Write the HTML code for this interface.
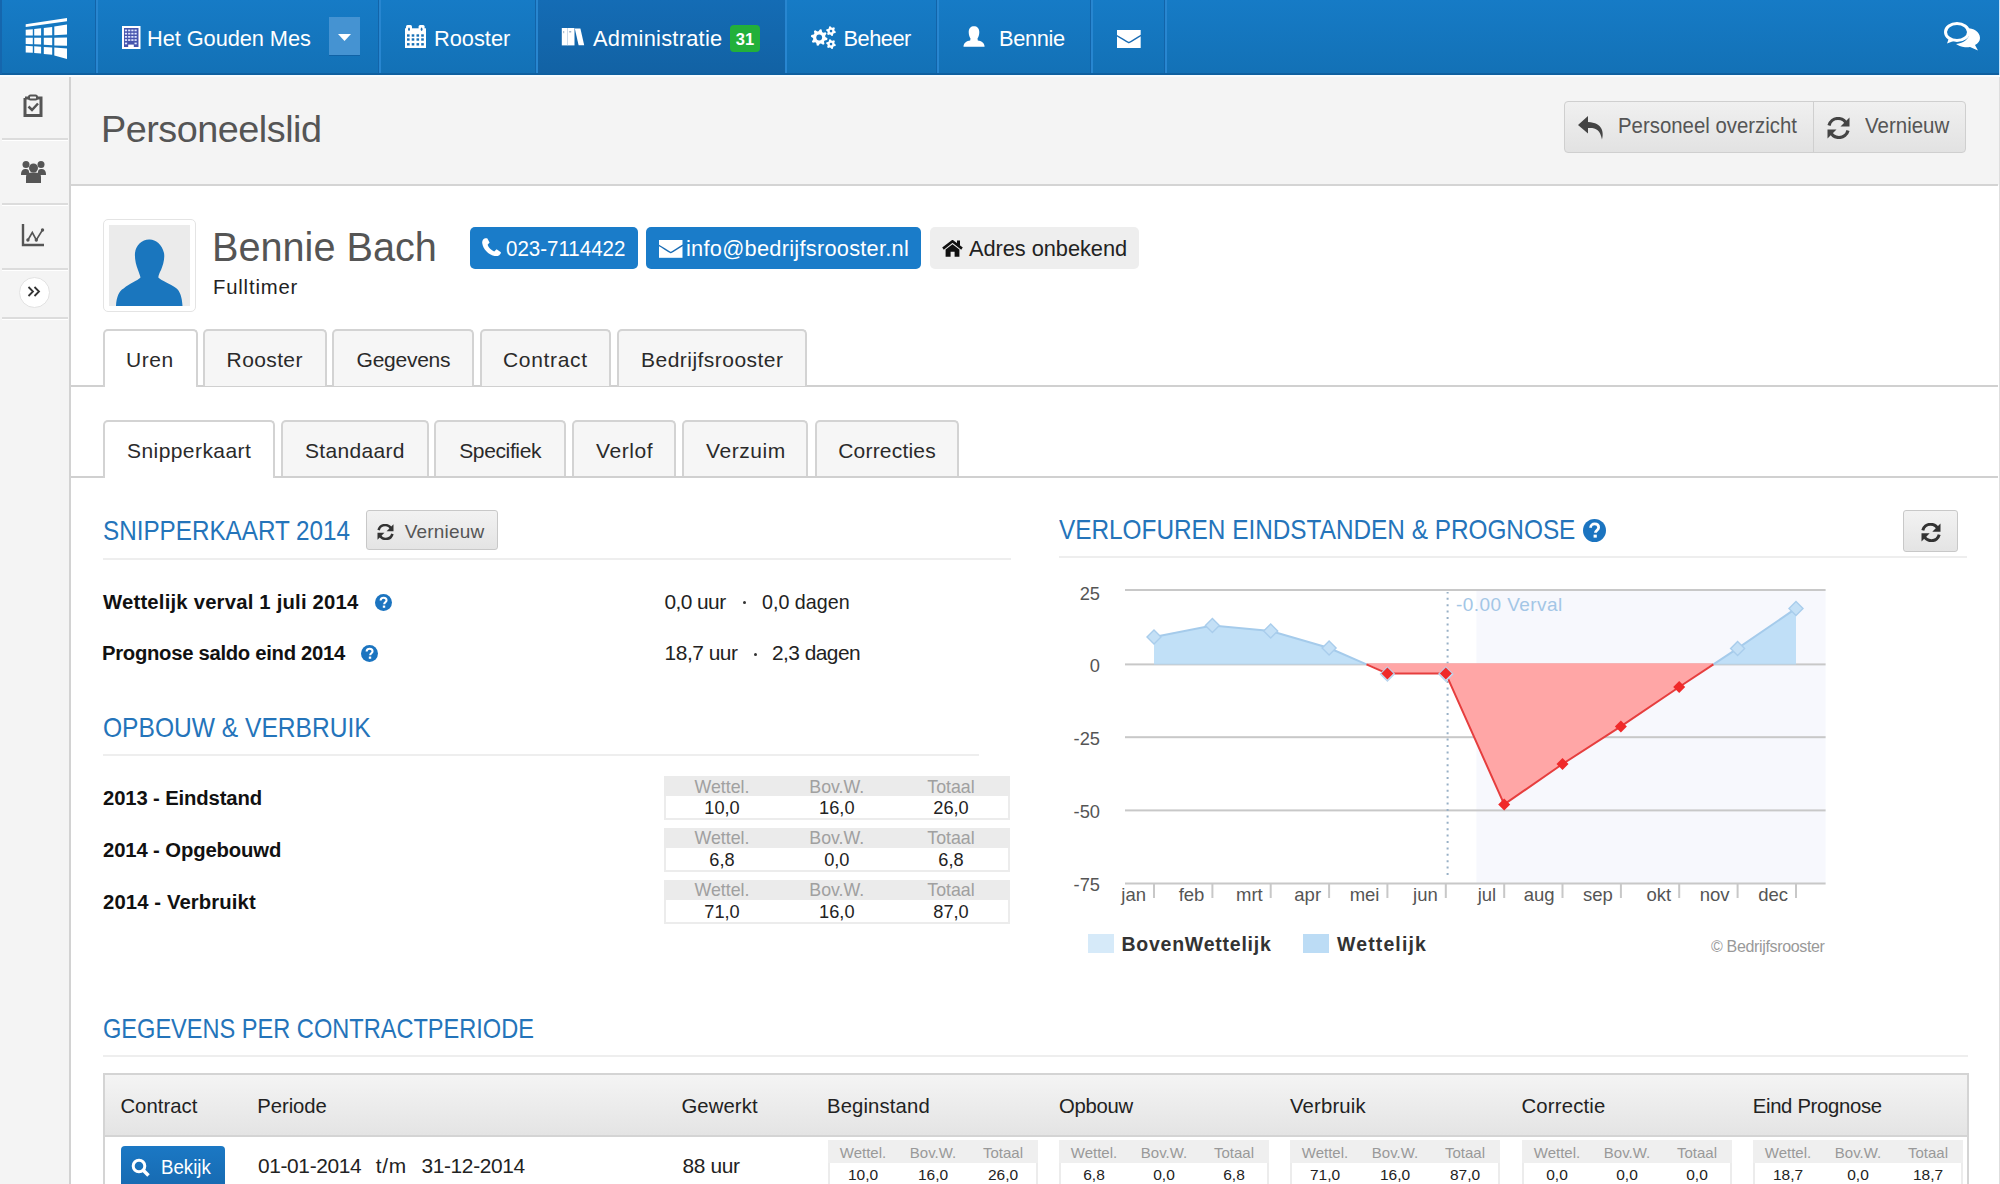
<!DOCTYPE html><html><head><meta charset="utf-8"><style>
html,body{margin:0;padding:0;}
body{width:2000px;height:1184px;overflow:hidden;position:relative;background:#fff;font-family:"Liberation Sans",sans-serif;}
.t{position:absolute;white-space:pre;line-height:1;}
svg{display:block;}
</style></head><body>
<div style="position:absolute;left:0px;top:0px;width:2000px;height:74px;background:linear-gradient(#167bc6,#1371b6);"></div>
<div style="position:absolute;left:0px;top:73px;width:2000px;height:2px;background:#0f60a0;"></div>
<div style="position:absolute;left:0px;top:75px;width:2000px;height:2px;background:#f7fcff;"></div>
<div style="position:absolute;left:537px;top:0px;width:248px;height:73px;background:linear-gradient(#146cb5,#1262a4);"></div>
<div style="position:absolute;left:95px;top:0px;width:1px;height:73px;background:#1264a9;"></div>
<div style="position:absolute;left:96px;top:0px;width:1.6px;height:73px;background:#2886d0;"></div>
<div style="position:absolute;left:378px;top:0px;width:1px;height:73px;background:#1264a9;"></div>
<div style="position:absolute;left:379px;top:0px;width:1.6px;height:73px;background:#2886d0;"></div>
<div style="position:absolute;left:535px;top:0px;width:1px;height:73px;background:#1264a9;"></div>
<div style="position:absolute;left:536px;top:0px;width:1.6px;height:73px;background:#2886d0;"></div>
<div style="position:absolute;left:785px;top:0px;width:1.6px;height:73px;background:#2886d0;"></div>
<div style="position:absolute;left:936px;top:0px;width:1px;height:73px;background:#1264a9;"></div>
<div style="position:absolute;left:937px;top:0px;width:1.6px;height:73px;background:#2886d0;"></div>
<div style="position:absolute;left:1090px;top:0px;width:1px;height:73px;background:#1264a9;"></div>
<div style="position:absolute;left:1091px;top:0px;width:1.6px;height:73px;background:#2886d0;"></div>
<div style="position:absolute;left:1164px;top:0px;width:1px;height:73px;background:#1264a9;"></div>
<div style="position:absolute;left:1165px;top:0px;width:1.6px;height:73px;background:#2886d0;"></div>
<div style="position:absolute;left:0px;top:0px;width:2px;height:74px;background:#1566ad;"></div>
<div style="position:absolute;left:1998.5px;top:0px;width:1.5px;height:74.5px;background:#c4e1f9;"></div>
<svg style="position:absolute;left:24px;top:16px;" width="46" height="46" viewBox="0 0 46 46"><g fill="#fff"><polygon points="1.7,8.2 43,2.1 43,5.2 1.7,11"/><polygon points="1.7,13.8 8.8,13.2 8.8,19.5 1.7,19.6"/><polygon points="10.2,13.0 17.1,12.2 17.1,19.4 10.2,19.5"/><polygon points="19.8,11.9 28.2,10.9 28.2,19.3 19.8,19.4"/><polygon points="30.3,10.6 43,8.6 43,18.5 30.3,19.2"/><polygon points="1.7,21.8 8.8,21.8 8.8,28.2 1.7,28.0"/><polygon points="10.2,21.8 17.1,21.8 17.1,28.6 10.2,28.3"/><polygon points="19.8,21.8 28.2,21.8 28.2,29.2 19.8,28.8"/><polygon points="30.3,21.7 43,21.6 43,29.7 30.3,29.4"/><polygon points="1.7,29.8 8.8,30.2 8.8,36.8 1.7,36.5"/><polygon points="10.2,30.3 17.1,30.7 17.1,37.6 10.2,37.1"/><polygon points="19.8,30.9 28.2,31.4 28.2,38.8 19.8,38.1"/><polygon points="30.3,31.6 43,32.4 43,43 30.3,39.5"/></g></svg>
<svg style="position:absolute;left:122px;top:26px;" width="18.5" height="23" viewBox="0 0 18.5 23"><rect x="0" y="0" width="18.5" height="23" fill="#fff"/><rect x="2" y="2" width="14.5" height="19" fill="#4654ad"/><g fill="#dfe8ff"><rect x="2.9" y="3.6" width="2.2" height="1.7"/><rect x="6.1" y="3.6" width="2.2" height="1.7"/><rect x="9.3" y="3.6" width="2.2" height="1.7"/><rect x="12.5" y="3.6" width="2.2" height="1.7"/><rect x="2.9" y="6.8" width="2.2" height="1.7"/><rect x="6.1" y="6.8" width="2.2" height="1.7"/><rect x="9.3" y="6.8" width="2.2" height="1.7"/><rect x="12.5" y="6.8" width="2.2" height="1.7"/><rect x="2.9" y="10" width="2.2" height="1.7"/><rect x="6.1" y="10" width="2.2" height="1.7"/><rect x="9.3" y="10" width="2.2" height="1.7"/><rect x="12.5" y="10" width="2.2" height="1.7"/><rect x="2.9" y="13.2" width="2.2" height="1.7"/><rect x="6.1" y="13.2" width="2.2" height="1.7"/><rect x="9.3" y="13.2" width="2.2" height="1.7"/><rect x="12.5" y="13.2" width="2.2" height="1.7"/><rect x="2.9" y="16.6" width="2.2" height="1.7"/><rect x="12.5" y="16.6" width="2.2" height="1.7"/></g><rect x="6.2" y="18.6" width="5.6" height="4.4" fill="#fff"/></svg>
<div style="position:absolute;left:329px;top:17px;width:31px;height:38px;background:#4593d2;box-shadow:0 1px 0 #1062a6;"></div>
<svg style="position:absolute;left:338px;top:34px;" width="13" height="7" viewBox="0 0 13 7"><polygon points="0,0 13,0 6.5,7" fill="#fff"/></svg>
<svg style="position:absolute;left:405px;top:24.5px;" width="21" height="23.5" viewBox="0 0 21 23.5"><rect x="0" y="3.3" width="21" height="20.2" fill="#fff"/><rect x="1" y="0" width="6" height="6" rx="1.5" fill="#fff"/><rect x="13.6" y="0" width="6" height="6" rx="1.5" fill="#fff"/><ellipse cx="4" cy="4.2" rx="0.9" ry="1.7" fill="#1a6fb5"/><ellipse cx="16.6" cy="4.2" rx="0.9" ry="1.7" fill="#1a6fb5"/><g fill="#1670b7"><rect x="2" y="9.3" width="2.6" height="2.4"/><rect x="6.7" y="9.3" width="2.6" height="2.4"/><rect x="11.5" y="9.3" width="2.6" height="2.4"/><rect x="16.2" y="9.3" width="2.6" height="2.4"/><rect x="2" y="13.3" width="2.6" height="2.4"/><rect x="6.7" y="13.3" width="2.6" height="2.4"/><rect x="11.5" y="13.3" width="2.6" height="2.4"/><rect x="16.2" y="13.3" width="2.6" height="2.4"/><rect x="2" y="18.1" width="2.6" height="2.4"/><rect x="6.7" y="18.1" width="2.6" height="2.4"/><rect x="11.5" y="18.1" width="2.6" height="2.4"/><rect x="16.2" y="18.1" width="2.6" height="2.4"/></g></svg>
<svg style="position:absolute;left:561px;top:28px;" width="24" height="18" viewBox="0 0 24 18"><g fill="#fff"><rect x="0.8" y="0" width="5.2" height="17.4"/><rect x="6.3" y="0" width="7.2" height="17.4"/><polygon points="13.8,0.6 19.4,0.6 23.2,17.2 17.6,17.2"/></g><rect x="2.2" y="3" width="1" height="2.2" fill="#9fb3c8"/><rect x="8.2" y="3" width="2" height="1.5" fill="#9fb3c8"/><rect x="6" y="0" width="0.8" height="17.4" fill="#d0dcea"/></svg>
<div style="position:absolute;left:730px;top:25px;width:30px;height:27px;background:#22b03a;border-radius:4px;"></div>
<svg style="position:absolute;left:809px;top:25px;" width="28" height="25" viewBox="0 0 28 25"><polygon points="18.46,13.31 18.14,14.91 15.67,15.42 14.99,16.43 15.47,18.92 14.11,19.82 12.00,18.43 10.81,18.67 9.39,20.76 7.79,20.44 7.28,17.97 6.27,17.29 3.78,17.77 2.88,16.41 4.27,14.30 4.03,13.11 1.94,11.69 2.26,10.09 4.73,9.58 5.41,8.57 4.93,6.08 6.29,5.18 8.40,6.57 9.59,6.33 11.01,4.24 12.61,4.56 13.12,7.03 14.13,7.71 16.62,7.23 17.52,8.59 16.13,10.70 16.37,11.89" fill="#fff"/><circle cx="10.2" cy="12.5" r="2.9" fill="#1874be"/><polygon points="26.86,6.74 26.53,7.98 24.86,8.29 24.19,8.96 23.88,10.63 22.64,10.96 21.53,9.67 20.62,9.43 19.02,9.99 18.11,9.08 18.67,7.48 18.43,6.57 17.14,5.46 17.47,4.22 19.14,3.91 19.81,3.24 20.12,1.57 21.36,1.24 22.47,2.53 23.38,2.77 24.98,2.21 25.89,3.12 25.33,4.72 25.57,5.63" fill="#fff"/><circle cx="22" cy="6.1" r="1.3" fill="#1874be"/><polygon points="26.86,19.74 26.53,20.98 24.86,21.29 24.19,21.96 23.88,23.63 22.64,23.96 21.53,22.67 20.62,22.43 19.02,22.99 18.11,22.08 18.67,20.48 18.43,19.57 17.14,18.46 17.47,17.22 19.14,16.91 19.81,16.24 20.12,14.57 21.36,14.24 22.47,15.53 23.38,15.77 24.98,15.21 25.89,16.12 25.33,17.72 25.57,18.63" fill="#fff"/><circle cx="22" cy="19.1" r="1.3" fill="#1874be"/></svg>
<svg style="position:absolute;left:963px;top:26px;" width="22" height="21" viewBox="0 0 22 21"><path d="M11,0.2 C14,0.2 16.3,2.2 16.3,6 C16.3,9 15.5,11 14.5,12.5 L14.8,14.5 C18,15 21.5,16.5 21.6,20.8 L0.5,20.8 C0.6,16.5 4,15 7.2,14.5 L7.5,12.5 C6.5,11 5.7,9 5.7,6 C5.7,2.2 8,0.2 11,0.2 Z" fill="#fff"/></svg>
<svg style="position:absolute;left:1117px;top:29.5px;" width="23.7" height="18" viewBox="0 0 23.7 18"><rect x="0" y="0" width="23.7" height="18" fill="#fff"/><path d="M-0.5,5.4 C4,7.6 8,11 11.85,12.7 C15.7,11 19.7,7.6 24.2,5.4" fill="none" stroke="#1a6cb4" stroke-width="1.3"/></svg>
<svg style="position:absolute;left:1944px;top:21px;" width="37" height="30" viewBox="0 0 37 30"><path d="M22,7 C30,7 36,11 36,17 C36,20 34,22.5 31,24 L34,29.5 L26,26 C24,26.3 23,26.3 21,26.2 C17,26 14,24.5 12,23 C20,22 25,18 25,13 C25,10.5 24,8.5 22,7 Z" fill="#fff"/><ellipse cx="13" cy="11" rx="11.5" ry="8.5" fill="none" stroke="#fff" stroke-width="3"/><path d="M5,17 L3,22.5 L11,19.5 Z" fill="#fff"/></svg>
<div style="position:absolute;left:0px;top:77px;width:69px;height:1107px;background:#f4f4f4;"></div>
<div style="position:absolute;left:69px;top:77px;width:2px;height:1107px;background:#d2d2d2;"></div>
<div style="position:absolute;left:2px;top:138px;width:66px;height:1.5px;background:#dcdcdc;"></div>
<div style="position:absolute;left:2px;top:139.5px;width:66px;height:1.5px;background:#fff;"></div>
<div style="position:absolute;left:2px;top:203px;width:66px;height:1.5px;background:#dcdcdc;"></div>
<div style="position:absolute;left:2px;top:204.5px;width:66px;height:1.5px;background:#fff;"></div>
<div style="position:absolute;left:2px;top:268px;width:66px;height:1.5px;background:#dcdcdc;"></div>
<div style="position:absolute;left:2px;top:269.5px;width:66px;height:1.5px;background:#fff;"></div>
<div style="position:absolute;left:2px;top:317px;width:66px;height:1.5px;background:#dcdcdc;"></div>
<div style="position:absolute;left:2px;top:318.5px;width:66px;height:1.5px;background:#fff;"></div>
<svg style="position:absolute;left:23px;top:94px;" width="20" height="23" viewBox="0 0 20 23"><path d="M2,4 H6 M14,4 H18 V21.5 H2 V4" fill="none" stroke="#555" stroke-width="3"/><rect x="6" y="1.5" width="8" height="4" rx="1.5" fill="none" stroke="#555" stroke-width="2"/><path d="M5.5,12.5 L9,16 L15,9.5" fill="none" stroke="#555" stroke-width="2.5"/></svg>
<svg style="position:absolute;left:21px;top:160px;" width="25" height="23" viewBox="0 0 25 23"><g fill="#555"><circle cx="5" cy="4.5" r="3.5"/><circle cx="20" cy="4.5" r="3.5"/><circle cx="12.5" cy="8" r="4.5"/><path d="M0,15 C0,10 2,9 5,9 C7,9 8,10 8,12 L8,15 Z"/><path d="M25,15 C25,10 23,9 20,9 C18,9 17,10 17,12 L17,15 Z"/><path d="M5,23 L5,17 C5,13 8,12.5 12.5,12.5 C17,12.5 20,13 20,17 L20,23 Z"/></g></svg>
<svg style="position:absolute;left:21px;top:224px;" width="24" height="23" viewBox="0 0 24 23"><path d="M2,0 V21 H23" fill="none" stroke="#555" stroke-width="2.4"/><path d="M6.9,16 L11.3,8.5 L15.3,16 L21.5,6" fill="none" stroke="#555" stroke-width="1.6"/><g fill="#555"><circle cx="6.9" cy="16" r="1.7"/><circle cx="15.3" cy="16" r="1.7"/><circle cx="21.5" cy="6" r="1.7"/></g></svg>
<div style="position:absolute;left:19px;top:277px;width:29px;height:29px;background:#fff;border:1px solid #e2e2e2;border-radius:50%;"></div>
<svg style="position:absolute;left:27px;top:285px;" width="14" height="13" viewBox="0 0 14 13"><path d="M1.5,2 L6,6.5 L1.5,11 M7.5,2 L12,6.5 L7.5,11" fill="none" stroke="#333" stroke-width="1.8"/></svg>
<div style="position:absolute;left:71px;top:77px;width:1928px;height:108px;background:#f4f4f4;"></div>
<div style="position:absolute;left:71px;top:184px;width:1927px;height:2px;background:#d4d4d4;"></div>
<div style="position:absolute;left:1999px;top:77px;width:1px;height:1107px;background:#dedede;"></div>
<div style="position:absolute;left:1564px;top:101px;width:402px;height:52px;background:linear-gradient(#f0f0f0,#e2e2e2);border:1px solid #cfcfcf;border-radius:4px;box-sizing:border-box;"></div>
<div style="position:absolute;left:1813px;top:102px;width:1px;height:50px;background:#cfcfcf;"></div>
<svg style="position:absolute;left:1578px;top:116px;" width="26" height="24" viewBox="0 0 26 24"><path d="M10,0 L0,9 L10,17.5 V12 C17,11.5 22,13 24,23.5 C26,17 25,6.5 10,6 Z" fill="#444"/></svg>
<svg style="position:absolute;left:1827px;top:117px;" width="23" height="22" viewBox="0 0 23 22"><path d="M20,8 C18.5,4 15,1.5 11,1.5 C6.5,1.5 3,4.5 2,8.5" fill="none" stroke="#444" stroke-width="3.2"/><polygon points="22.5,0.5 22.5,9.5 13.5,9.5" fill="#444"/><path d="M3,14 C4.5,18 8,20.5 12,20.5 C16.5,20.5 20,17.5 21,13.5" fill="none" stroke="#444" stroke-width="3.2"/><polygon points="0.5,21.5 0.5,12.5 9.5,12.5" fill="#444"/></svg>
<div style="position:absolute;left:103px;top:219px;width:93px;height:93px;background:#fff;border:1px solid #e4e4e4;border-radius:5px;box-sizing:border-box;"></div>
<div style="position:absolute;left:109px;top:225px;width:81px;height:81px;background:#ebebeb;"></div>
<svg style="position:absolute;left:109px;top:225px;" width="81" height="81" viewBox="0 0 81 81"><path d="M40,14.5 C46,14 53,19 55,28 C56,34 54,40 52,45 C50.5,48 49.5,50 49.3,52.5 C53,56 60,58 67,63 C71,66 73,72 73.5,81 L7,81 C7.5,72 10,66 14.6,63.5 C21,58 28,56 31.5,52.5 C31,50 30,48 29,45 C27,40 25.5,34 26,28 C27,20 33,14.5 40,14.5 Z" fill="#1a76be"/></svg>
<div style="position:absolute;left:470px;top:227px;width:168px;height:42px;background:#1a7cc9;border-radius:5px;"></div>
<svg style="position:absolute;left:482px;top:237.5px;" width="19" height="18.5" viewBox="0 0 19 18.5"><path d="M3.2,0.3 C1.2,0.8 0,2.8 0.2,5 C1,11.5 7.5,17.8 14,18.2 C16,18.3 17.8,17.3 18.7,15.6 L18.9,14.2 L14.6,11.3 L12.2,13.4 C9.2,12.4 6.6,9.8 5.6,6.8 L7.6,4.6 L5.2,0.2 Z" fill="#fff"/></svg>
<div style="position:absolute;left:646px;top:227px;width:275px;height:42px;background:#1a7cc9;border-radius:5px;"></div>
<svg style="position:absolute;left:659px;top:240px;" width="23.5" height="17.8" viewBox="0 0 23.5 17.8"><rect x="0" y="0" width="23.5" height="17.8" fill="#fff"/><path d="M-0.5,5.2 C4,7.5 8,11 11.75,12.6 C15.5,11 19.5,7.5 24,5.2" fill="none" stroke="#1a6cb4" stroke-width="1.3"/></svg>
<div style="position:absolute;left:930px;top:227px;width:209px;height:42px;background:#eeeeee;border-radius:5px;"></div>
<svg style="position:absolute;left:942px;top:239.5px;" width="21" height="17" viewBox="0 0 21 17"><polyline points="1,8.6 10.5,1.3 20,8.6" fill="none" stroke="#111" stroke-width="2.6"/><rect x="15" y="0.5" width="3" height="5" fill="#111"/><path d="M3.6,9.6 L10.5,4.2 L17.4,9.6 V16.8 H12.6 V11.8 H8.6 V16.8 H3.6 Z" fill="#111"/></svg>
<div style="position:absolute;left:71px;top:385px;width:1927px;height:2px;background:#d0d0d0;"></div>
<div style="position:absolute;left:103px;top:329px;width:95px;height:58px;background:#fff;border:2px solid #d3d3d3;border-bottom:none;border-radius:5px 5px 0 0;box-sizing:border-box;"></div>
<div style="position:absolute;left:203px;top:329px;width:124px;height:57px;background:#f6f6f6;border:2px solid #d3d3d3;border-bottom:none;border-radius:5px 5px 0 0;box-sizing:border-box;"></div>
<div style="position:absolute;left:332px;top:329px;width:142px;height:57px;background:#f6f6f6;border:2px solid #d3d3d3;border-bottom:none;border-radius:5px 5px 0 0;box-sizing:border-box;"></div>
<div style="position:absolute;left:480px;top:329px;width:131px;height:57px;background:#f6f6f6;border:2px solid #d3d3d3;border-bottom:none;border-radius:5px 5px 0 0;box-sizing:border-box;"></div>
<div style="position:absolute;left:617px;top:329px;width:190px;height:57px;background:#f6f6f6;border:2px solid #d3d3d3;border-bottom:none;border-radius:5px 5px 0 0;box-sizing:border-box;"></div>
<div style="position:absolute;left:71px;top:476px;width:1927px;height:2px;background:#d0d0d0;"></div>
<div style="position:absolute;left:103px;top:420px;width:172px;height:58px;background:#fff;border:2px solid #d3d3d3;border-bottom:none;border-radius:5px 5px 0 0;box-sizing:border-box;"></div>
<div style="position:absolute;left:281px;top:420px;width:148px;height:56px;background:#f6f6f6;border:2px solid #d3d3d3;border-bottom:none;border-radius:5px 5px 0 0;box-sizing:border-box;"></div>
<div style="position:absolute;left:434px;top:420px;width:132px;height:56px;background:#f6f6f6;border:2px solid #d3d3d3;border-bottom:none;border-radius:5px 5px 0 0;box-sizing:border-box;"></div>
<div style="position:absolute;left:572px;top:420px;width:104px;height:56px;background:#f6f6f6;border:2px solid #d3d3d3;border-bottom:none;border-radius:5px 5px 0 0;box-sizing:border-box;"></div>
<div style="position:absolute;left:682px;top:420px;width:126px;height:56px;background:#f6f6f6;border:2px solid #d3d3d3;border-bottom:none;border-radius:5px 5px 0 0;box-sizing:border-box;"></div>
<div style="position:absolute;left:815px;top:420px;width:144px;height:56px;background:#f6f6f6;border:2px solid #d3d3d3;border-bottom:none;border-radius:5px 5px 0 0;box-sizing:border-box;"></div>
<div style="position:absolute;left:366px;top:510px;width:132px;height:40px;background:linear-gradient(#f2f2f2,#e4e4e4);border:1px solid #c8c8c8;border-radius:3px;box-sizing:border-box;"></div>
<svg style="position:absolute;left:377px;top:524px;" width="17" height="16" viewBox="0 0 23 22"><path d="M20,8 C18.5,4 15,1.5 11,1.5 C6.5,1.5 3,4.5 2,8.5" fill="none" stroke="#333" stroke-width="3.5"/><polygon points="22.5,0.5 22.5,10 13,10" fill="#333"/><path d="M3,14 C4.5,18 8,20.5 12,20.5 C16.5,20.5 20,17.5 21,13.5" fill="none" stroke="#333" stroke-width="3.5"/><polygon points="0.5,21.5 0.5,12 10,12" fill="#333"/></svg>
<div style="position:absolute;left:103px;top:558px;width:908px;height:2px;background:#eeeeee;"></div>
<svg style="position:absolute;left:375px;top:594px;" width="17" height="17" viewBox="0 0 20 20"><circle cx="10" cy="10" r="10" fill="#1b74c0"/><path d="M6.6,7.6 C6.6,5.5 8.2,4.3 10.1,4.3 C12.2,4.3 13.6,5.6 13.6,7.3 C13.6,9.6 10.8,9.8 10.8,12" fill="none" stroke="#fff" stroke-width="2.4"/><rect x="9.2" y="13.6" width="2.8" height="2.6" fill="#fff"/></svg>
<svg style="position:absolute;left:361px;top:645px;" width="17" height="17" viewBox="0 0 20 20"><circle cx="10" cy="10" r="10" fill="#1b74c0"/><path d="M6.6,7.6 C6.6,5.5 8.2,4.3 10.1,4.3 C12.2,4.3 13.6,5.6 13.6,7.3 C13.6,9.6 10.8,9.8 10.8,12" fill="none" stroke="#fff" stroke-width="2.4"/><rect x="9.2" y="13.6" width="2.8" height="2.6" fill="#fff"/></svg>
<div style="position:absolute;left:743px;top:601px;width:3px;height:3px;background:#333;border-radius:50%;"></div>
<div style="position:absolute;left:754px;top:653px;width:3px;height:3px;background:#333;border-radius:50%;"></div>
<div style="position:absolute;left:103px;top:754px;width:876px;height:2px;background:#eeeeee;"></div>
<div style="position:absolute;left:664px;top:776.0px;width:346px;height:44px;background:#fff;border:2px solid #ececec;border-top:none;box-sizing:border-box;"></div>
<div style="position:absolute;left:664px;top:776.0px;width:346px;height:20px;background:#ebebeb;"></div>
<div style="position:absolute;left:664px;top:827.8px;width:346px;height:44px;background:#fff;border:2px solid #ececec;border-top:none;box-sizing:border-box;"></div>
<div style="position:absolute;left:664px;top:827.8px;width:346px;height:20px;background:#ebebeb;"></div>
<div style="position:absolute;left:664px;top:879.6px;width:346px;height:44px;background:#fff;border:2px solid #ececec;border-top:none;box-sizing:border-box;"></div>
<div style="position:absolute;left:664px;top:879.6px;width:346px;height:20px;background:#ebebeb;"></div>
<svg style="position:absolute;left:1583px;top:519px;" width="23" height="23" viewBox="0 0 20 20"><circle cx="10" cy="10" r="10" fill="#1b74c0"/><path d="M6.6,7.6 C6.6,5.5 8.2,4.3 10.1,4.3 C12.2,4.3 13.6,5.6 13.6,7.3 C13.6,9.6 10.8,9.8 10.8,12" fill="none" stroke="#fff" stroke-width="2.4"/><rect x="9.2" y="13.6" width="2.8" height="2.6" fill="#fff"/></svg>
<div style="position:absolute;left:1903px;top:510px;width:55px;height:42px;background:linear-gradient(#f2f2f2,#e4e4e4);border:1px solid #c8c8c8;border-radius:3px;box-sizing:border-box;"></div>
<svg style="position:absolute;left:1921px;top:523px;" width="20" height="19" viewBox="0 0 23 22"><path d="M20,8 C18.5,4 15,1.5 11,1.5 C6.5,1.5 3,4.5 2,8.5" fill="none" stroke="#333" stroke-width="3.5"/><polygon points="22.5,0.5 22.5,10 13,10" fill="#333"/><path d="M3,14 C4.5,18 8,20.5 12,20.5 C16.5,20.5 20,17.5 21,13.5" fill="none" stroke="#333" stroke-width="3.5"/><polygon points="0.5,21.5 0.5,12 10,12" fill="#333"/></svg>
<div style="position:absolute;left:1059px;top:556px;width:908px;height:2px;background:#eeeeee;"></div>
<svg style="position:absolute;left:0;top:0" width="2000" height="1184"><rect x="1476.4" y="590" width="349.2" height="293.5" fill="#f7f8fd"/><rect x="1125" y="589" width="700.6" height="2" fill="#c8c8c8"/><rect x="1125" y="663.4" width="700.6" height="2" fill="#c8c8c8"/><rect x="1125" y="736.2" width="700.6" height="2" fill="#c8c8c8"/><rect x="1125" y="809.4" width="700.6" height="2" fill="#c8c8c8"/><rect x="1125" y="882.5" width="700.6" height="2" fill="#c8c8c8"/><line x1="1447.6" y1="592" x2="1447.6" y2="878" stroke="#98b0c6" stroke-width="2" stroke-dasharray="2,4.4" stroke-dashoffset="0.6"/><polygon points="1154.0,664.4 1154.0,637.0 1212.4,625.6 1270.7,631.0 1329.1,648.0 1366.5,664.4" fill="#b6dbf6" fill-opacity="0.85"/><polyline points="1154.0,637.0 1212.4,625.6 1270.7,631.0 1329.1,648.0 1366.5,664.4" fill="none" stroke="#a5cbeb" stroke-width="2"/><polygon points="1713.4,664.4 1737.6,648.4 1796.0,608.4 1796.0,664.4" fill="#b6dbf6" fill-opacity="0.85"/><polyline points="1713.4,664.4 1737.6,648.4 1796.0,608.4" fill="none" stroke="#a5cbeb" stroke-width="2"/><polygon points="1366.5,663.1999999999999 1387.4,673.6 1445.8,673.6 1504.2,804.4 1562.5,764.0 1620.9,726.4 1679.2,687.0 1713.4,663.1999999999999" fill="#ffa6a6"/><polyline points="1366.5,664.4 1387.4,673.6 1445.8,673.6 1504.2,804.4 1562.5,764.0 1620.9,726.4 1679.2,687.0 1713.4,664.4" fill="none" stroke="#e63e3e" stroke-width="2" stroke-linejoin="round"/><polygon points="1154.0,630.0 1161.0,637.0 1154.0,644.0 1147.0,637.0" fill="#c4e0f6" stroke="#a9cdec" stroke-width="1.4"/><polygon points="1212.4,618.6 1219.4,625.6 1212.4,632.6 1205.4,625.6" fill="#c4e0f6" stroke="#a9cdec" stroke-width="1.4"/><polygon points="1270.7,624.0 1277.7,631.0 1270.7,638.0 1263.7,631.0" fill="#c4e0f6" stroke="#a9cdec" stroke-width="1.4"/><polygon points="1329.1,641.0 1336.1,648.0 1329.1,655.0 1322.1,648.0" fill="#c4e0f6" stroke="#a9cdec" stroke-width="1.4"/><polygon points="1737.6,641.4 1744.6,648.4 1737.6,655.4 1730.6,648.4" fill="#c4e0f6" stroke="#a9cdec" stroke-width="1.4"/><polygon points="1796.0,601.4 1803.0,608.4 1796.0,615.4 1789.0,608.4" fill="#c4e0f6" stroke="#a9cdec" stroke-width="1.4"/><polygon points="1387.4,667.1 1394.4,674.1 1387.4,681.1 1380.4,674.1" fill="#d5e8f7" stroke="#b5d3ee" stroke-width="1.2"/><polygon points="1445.8,667.1 1452.8,674.1 1445.8,681.1 1438.8,674.1" fill="#d5e8f7" stroke="#b5d3ee" stroke-width="1.2"/><polygon points="1387.4,667.6 1393.4,673.6 1387.4,679.6 1381.4,673.6" fill="#f02a2a" stroke="none" stroke-width="0"/><polygon points="1445.8,667.6 1451.8,673.6 1445.8,679.6 1439.8,673.6" fill="#f02a2a" stroke="none" stroke-width="0"/><polygon points="1504.2,798.4 1510.2,804.4 1504.2,810.4 1498.2,804.4" fill="#f02a2a" stroke="none" stroke-width="0"/><polygon points="1562.5,758.0 1568.5,764.0 1562.5,770.0 1556.5,764.0" fill="#f02a2a" stroke="none" stroke-width="0"/><polygon points="1620.9,720.4 1626.9,726.4 1620.9,732.4 1614.9,726.4" fill="#f02a2a" stroke="none" stroke-width="0"/><polygon points="1679.2,681.0 1685.2,687.0 1679.2,693.0 1673.2,687.0" fill="#f02a2a" stroke="none" stroke-width="0"/><rect x="1153.0" y="883" width="2" height="15" fill="#c8c8c8"/><rect x="1211.4" y="883" width="2" height="15" fill="#c8c8c8"/><rect x="1269.7" y="883" width="2" height="15" fill="#c8c8c8"/><rect x="1328.1" y="883" width="2" height="15" fill="#c8c8c8"/><rect x="1386.4" y="883" width="2" height="15" fill="#c8c8c8"/><rect x="1444.8" y="883" width="2" height="15" fill="#c8c8c8"/><rect x="1503.2" y="883" width="2" height="15" fill="#c8c8c8"/><rect x="1561.5" y="883" width="2" height="15" fill="#c8c8c8"/><rect x="1619.9" y="883" width="2" height="15" fill="#c8c8c8"/><rect x="1678.2" y="883" width="2" height="15" fill="#c8c8c8"/><rect x="1736.6" y="883" width="2" height="15" fill="#c8c8c8"/><rect x="1795.0" y="883" width="2" height="15" fill="#c8c8c8"/></svg>
<div style="position:absolute;left:1088px;top:934px;width:26px;height:19px;background:#d6eaf9;"></div>
<div style="position:absolute;left:1303px;top:934px;width:26px;height:19px;background:#bcdcf5;"></div>
<div style="position:absolute;left:103px;top:1055px;width:1865px;height:2px;background:#eeeeee;"></div>
<div style="position:absolute;left:103px;top:1073px;width:1866px;height:200px;background:#fff;border:2px solid #d4d4d4;box-sizing:border-box;"></div>
<div style="position:absolute;left:105px;top:1075px;width:1862px;height:60px;background:linear-gradient(#f4f4f4,#e4e4e4);"></div>
<div style="position:absolute;left:105px;top:1135px;width:1862px;height:2px;background:#d4d4d4;"></div>
<div style="position:absolute;left:121px;top:1146px;width:104px;height:50px;background:linear-gradient(#1b78c4,#1667ad);border-radius:4px;"></div>
<svg style="position:absolute;left:131px;top:1158px;" width="19" height="19" viewBox="0 0 19 19"><circle cx="8" cy="8" r="5.8" fill="none" stroke="#fff" stroke-width="3"/><path d="M12,12 L17.5,17.5" stroke="#fff" stroke-width="3.5"/></svg>
<div style="position:absolute;left:828px;top:1140px;width:210px;height:60px;background:#fff;border:2px solid #ececec;box-sizing:border-box;"></div>
<div style="position:absolute;left:828px;top:1140px;width:210px;height:23px;background:#efefef;"></div>
<div style="position:absolute;left:1059px;top:1140px;width:210px;height:60px;background:#fff;border:2px solid #ececec;box-sizing:border-box;"></div>
<div style="position:absolute;left:1059px;top:1140px;width:210px;height:23px;background:#efefef;"></div>
<div style="position:absolute;left:1290px;top:1140px;width:210px;height:60px;background:#fff;border:2px solid #ececec;box-sizing:border-box;"></div>
<div style="position:absolute;left:1290px;top:1140px;width:210px;height:23px;background:#efefef;"></div>
<div style="position:absolute;left:1522px;top:1140px;width:210px;height:60px;background:#fff;border:2px solid #ececec;box-sizing:border-box;"></div>
<div style="position:absolute;left:1522px;top:1140px;width:210px;height:23px;background:#efefef;"></div>
<div style="position:absolute;left:1753px;top:1140px;width:210px;height:60px;background:#fff;border:2px solid #ececec;box-sizing:border-box;"></div>
<div style="position:absolute;left:1753px;top:1140px;width:210px;height:23px;background:#efefef;"></div>
<div class="t" style="left:147.00px;top:28.1px;font-size:21.8px;color:#fff;font-weight:400;letter-spacing:-0.067px;"><span>Het Gouden Mes</span></div>
<div class="t" style="left:434.00px;top:28.1px;font-size:21.8px;color:#fff;font-weight:400;letter-spacing:-0.010px;"><span>Rooster</span></div>
<div class="t" style="left:593.00px;top:28.1px;font-size:21.8px;color:#fff;font-weight:400;letter-spacing:0.262px;"><span>Administratie</span></div>
<div class="t" style="left:445px;width:600px;text-align:center;top:31.1px;font-size:16.5px;color:#fff;font-weight:700;"><span>31</span></div>
<div class="t" style="left:843.50px;top:28.1px;font-size:21.8px;color:#fff;font-weight:400;letter-spacing:-0.506px;"><span>Beheer</span></div>
<div class="t" style="left:999.00px;top:28.1px;font-size:21.8px;color:#fff;font-weight:400;letter-spacing:-0.350px;"><span>Bennie</span></div>
<div class="t" style="left:101.00px;top:111.1px;font-size:37.8px;color:#555;font-weight:400;letter-spacing:-0.491px;"><span>Personeelslid</span></div>
<div class="t" style="left:1618.06px;top:115.1px;font-size:21.8px;color:#555;font-weight:400;transform:scaleX(0.9350);transform-origin:left;"><span>Personeel overzicht</span></div>
<div class="t" style="left:1864.50px;top:115.1px;font-size:21.8px;color:#555;font-weight:400;transform:scaleX(0.9397);transform-origin:left;"><span>Vernieuw</span></div>
<div class="t" style="left:211.83px;top:226.6px;font-size:41.4px;color:#555;font-weight:400;transform:scaleX(0.9578);transform-origin:left;"><span>Bennie Bach</span></div>
<div class="t" style="left:213.00px;top:276.6px;font-size:20.3px;color:#222;font-weight:400;letter-spacing:0.813px;"><span>Fulltimer</span></div>
<div class="t" style="left:505.70px;top:238.1px;font-size:21.8px;color:#fff;font-weight:400;transform:scaleX(0.9413);transform-origin:left;"><span>023-7114422</span></div>
<div class="t" style="left:686.00px;top:238.1px;font-size:21.8px;color:#fff;font-weight:400;letter-spacing:0.257px;"><span>info@bedrijfsrooster.nl</span></div>
<div class="t" style="left:969.00px;top:238.1px;font-size:21.8px;color:#222;font-weight:400;letter-spacing:-0.048px;"><span>Adres onbekend</span></div>
<div class="t" style="left:126.00px;top:349.2px;font-size:21px;color:#2a2a2a;font-weight:400;letter-spacing:0.521px;"><span>Uren</span></div>
<div class="t" style="left:226.60px;top:349.2px;font-size:21px;color:#2a2a2a;font-weight:400;letter-spacing:0.377px;"><span>Rooster</span></div>
<div class="t" style="left:356.60px;top:349.2px;font-size:21px;color:#2a2a2a;font-weight:400;letter-spacing:-0.261px;"><span>Gegevens</span></div>
<div class="t" style="left:503.00px;top:349.2px;font-size:21px;color:#2a2a2a;font-weight:400;letter-spacing:0.667px;"><span>Contract</span></div>
<div class="t" style="left:641.00px;top:349.2px;font-size:21px;color:#2a2a2a;font-weight:400;letter-spacing:0.472px;"><span>Bedrijfsrooster</span></div>
<div class="t" style="left:127.00px;top:439.8px;font-size:21px;color:#2a2a2a;font-weight:400;letter-spacing:0.433px;"><span>Snipperkaart</span></div>
<div class="t" style="left:305.00px;top:439.8px;font-size:21px;color:#2a2a2a;font-weight:400;letter-spacing:0.315px;"><span>Standaard</span></div>
<div class="t" style="left:459.20px;top:439.8px;font-size:21px;color:#2a2a2a;font-weight:400;letter-spacing:-0.364px;"><span>Specifiek</span></div>
<div class="t" style="left:596.00px;top:439.8px;font-size:21px;color:#2a2a2a;font-weight:400;letter-spacing:0.587px;"><span>Verlof</span></div>
<div class="t" style="left:706.00px;top:439.8px;font-size:21px;color:#2a2a2a;font-weight:400;letter-spacing:0.572px;"><span>Verzuim</span></div>
<div class="t" style="left:838.20px;top:439.8px;font-size:21px;color:#2a2a2a;font-weight:400;letter-spacing:0.201px;"><span>Correcties</span></div>
<div class="t" style="left:102.52px;top:516.5px;font-size:27.6px;color:#2474ba;font-weight:400;transform:scaleX(0.8786);transform-origin:left;"><span>SNIPPERKAART 2014</span></div>
<div class="t" style="left:404.70px;top:522.3px;font-size:19px;color:#555;font-weight:400;letter-spacing:0.194px;"><span>Vernieuw</span></div>
<div class="t" style="left:103.00px;top:592.2px;font-size:20.3px;color:#111;font-weight:700;letter-spacing:0.199px;"><span>Wettelijk verval 1 juli 2014</span></div>
<div class="t" style="left:102.00px;top:643.4px;font-size:20.3px;color:#111;font-weight:700;letter-spacing:-0.302px;"><span>Prognose saldo eind 2014</span></div>
<div class="t" style="left:664.40px;top:591.7px;font-size:20.9px;color:#222;font-weight:400;letter-spacing:-0.547px;"><span>0,0 uur</span></div>
<div class="t" style="left:761.60px;top:591.7px;font-size:20.9px;color:#222;font-weight:400;transform:scaleX(0.9424);transform-origin:left;"><span>0,0 dagen</span></div>
<div class="t" style="left:664.60px;top:642.9px;font-size:20.9px;color:#222;font-weight:400;letter-spacing:-0.471px;"><span>18,7 uur</span></div>
<div class="t" style="left:772.00px;top:642.9px;font-size:20.9px;color:#222;font-weight:400;letter-spacing:-0.540px;"><span>2,3 dagen</span></div>
<div class="t" style="left:102.81px;top:713.5px;font-size:27.6px;color:#2474ba;font-weight:400;transform:scaleX(0.8907);transform-origin:left;"><span>OPBOUW &amp; VERBRUIK</span></div>
<div class="t" style="left:103.00px;top:788.4px;font-size:20.3px;color:#111;font-weight:700;letter-spacing:-0.139px;"><span>2013 - Eindstand</span></div>
<div class="t" style="left:422px;width:600px;text-align:center;top:778.5px;font-size:17.8px;color:#a0a0a0;font-weight:400;"><span>Wettel.</span></div>
<div class="t" style="left:422px;width:600px;text-align:center;top:799.2px;font-size:18.2px;color:#222;font-weight:400;"><span>10,0</span></div>
<div class="t" style="left:536.8px;width:600px;text-align:center;top:778.5px;font-size:17.8px;color:#a0a0a0;font-weight:400;"><span>Bov.W.</span></div>
<div class="t" style="left:536.8px;width:600px;text-align:center;top:799.2px;font-size:18.2px;color:#222;font-weight:400;"><span>16,0</span></div>
<div class="t" style="left:651px;width:600px;text-align:center;top:778.5px;font-size:17.8px;color:#a0a0a0;font-weight:400;"><span>Totaal</span></div>
<div class="t" style="left:651px;width:600px;text-align:center;top:799.2px;font-size:18.2px;color:#222;font-weight:400;"><span>26,0</span></div>
<div class="t" style="left:103.00px;top:840.2px;font-size:20.3px;color:#111;font-weight:700;letter-spacing:-0.128px;"><span>2014 - Opgebouwd</span></div>
<div class="t" style="left:422px;width:600px;text-align:center;top:830.3px;font-size:17.8px;color:#a0a0a0;font-weight:400;"><span>Wettel.</span></div>
<div class="t" style="left:422px;width:600px;text-align:center;top:851.0px;font-size:18.2px;color:#222;font-weight:400;"><span>6,8</span></div>
<div class="t" style="left:536.8px;width:600px;text-align:center;top:830.3px;font-size:17.8px;color:#a0a0a0;font-weight:400;"><span>Bov.W.</span></div>
<div class="t" style="left:536.8px;width:600px;text-align:center;top:851.0px;font-size:18.2px;color:#222;font-weight:400;"><span>0,0</span></div>
<div class="t" style="left:651px;width:600px;text-align:center;top:830.3px;font-size:17.8px;color:#a0a0a0;font-weight:400;"><span>Totaal</span></div>
<div class="t" style="left:651px;width:600px;text-align:center;top:851.0px;font-size:18.2px;color:#222;font-weight:400;"><span>6,8</span></div>
<div class="t" style="left:103.00px;top:892.0px;font-size:20.3px;color:#111;font-weight:700;letter-spacing:0.106px;"><span>2014 - Verbruikt</span></div>
<div class="t" style="left:422px;width:600px;text-align:center;top:882.1px;font-size:17.8px;color:#a0a0a0;font-weight:400;"><span>Wettel.</span></div>
<div class="t" style="left:422px;width:600px;text-align:center;top:902.8px;font-size:18.2px;color:#222;font-weight:400;"><span>71,0</span></div>
<div class="t" style="left:536.8px;width:600px;text-align:center;top:882.1px;font-size:17.8px;color:#a0a0a0;font-weight:400;"><span>Bov.W.</span></div>
<div class="t" style="left:536.8px;width:600px;text-align:center;top:902.8px;font-size:18.2px;color:#222;font-weight:400;"><span>16,0</span></div>
<div class="t" style="left:651px;width:600px;text-align:center;top:882.1px;font-size:17.8px;color:#a0a0a0;font-weight:400;"><span>Totaal</span></div>
<div class="t" style="left:651px;width:600px;text-align:center;top:902.8px;font-size:18.2px;color:#222;font-weight:400;"><span>87,0</span></div>
<div class="t" style="left:1059.00px;top:516.2px;font-size:27.6px;color:#2474ba;font-weight:400;transform:scaleX(0.8824);transform-origin:left;"><span>VERLOFUREN EINDSTANDEN &amp; PROGNOSE</span></div>
<div class="t" style="left:500px;width:600px;text-align:right;top:584.7px;font-size:18.3px;color:#555;font-weight:400;"><span>25</span></div>
<div class="t" style="left:500px;width:600px;text-align:right;top:657.1px;font-size:18.3px;color:#555;font-weight:400;"><span>0</span></div>
<div class="t" style="left:500px;width:600px;text-align:right;top:729.5px;font-size:18.3px;color:#555;font-weight:400;"><span>-25</span></div>
<div class="t" style="left:500px;width:600px;text-align:right;top:802.7px;font-size:18.3px;color:#555;font-weight:400;"><span>-50</span></div>
<div class="t" style="left:500px;width:600px;text-align:right;top:875.5px;font-size:18.3px;color:#555;font-weight:400;"><span>-75</span></div>
<div class="t" style="left:546.0px;width:600px;text-align:right;top:885.9px;font-size:18.5px;color:#555;font-weight:400;"><span>jan</span></div>
<div class="t" style="left:604.3599999999999px;width:600px;text-align:right;top:885.9px;font-size:18.5px;color:#555;font-weight:400;"><span>feb</span></div>
<div class="t" style="left:662.72px;width:600px;text-align:right;top:885.9px;font-size:18.5px;color:#555;font-weight:400;"><span>mrt</span></div>
<div class="t" style="left:721.0799999999999px;width:600px;text-align:right;top:885.9px;font-size:18.5px;color:#555;font-weight:400;"><span>apr</span></div>
<div class="t" style="left:779.44px;width:600px;text-align:right;top:885.9px;font-size:18.5px;color:#555;font-weight:400;"><span>mei</span></div>
<div class="t" style="left:837.8px;width:600px;text-align:right;top:885.9px;font-size:18.5px;color:#555;font-weight:400;"><span>jun</span></div>
<div class="t" style="left:896.1599999999999px;width:600px;text-align:right;top:885.9px;font-size:18.5px;color:#555;font-weight:400;"><span>jul</span></div>
<div class="t" style="left:954.52px;width:600px;text-align:right;top:885.9px;font-size:18.5px;color:#555;font-weight:400;"><span>aug</span></div>
<div class="t" style="left:1012.8800000000001px;width:600px;text-align:right;top:885.9px;font-size:18.5px;color:#555;font-weight:400;"><span>sep</span></div>
<div class="t" style="left:1071.24px;width:600px;text-align:right;top:885.9px;font-size:18.5px;color:#555;font-weight:400;"><span>okt</span></div>
<div class="t" style="left:1129.6px;width:600px;text-align:right;top:885.9px;font-size:18.5px;color:#555;font-weight:400;"><span>nov</span></div>
<div class="t" style="left:1187.96px;width:600px;text-align:right;top:885.9px;font-size:18.5px;color:#555;font-weight:400;"><span>dec</span></div>
<div class="t" style="left:1456.00px;top:594.5px;font-size:19px;color:#a3c6e6;font-weight:400;letter-spacing:0.439px;"><span>-0.00 Verval</span></div>
<div class="t" style="left:1121.40px;top:935.1px;font-size:19.5px;color:#333;font-weight:700;letter-spacing:0.771px;"><span>BovenWettelijk</span></div>
<div class="t" style="left:1337.00px;top:935.1px;font-size:19.5px;color:#333;font-weight:700;letter-spacing:1.127px;"><span>Wettelijk</span></div>
<div class="t" style="left:1711.00px;top:939.1px;font-size:16px;color:#999;font-weight:400;letter-spacing:-0.341px;"><span>© Bedrijfsrooster</span></div>
<div class="t" style="left:103.15px;top:1014.9px;font-size:27.6px;color:#2474ba;font-weight:400;transform:scaleX(0.8542);transform-origin:left;"><span>GEGEVENS PER CONTRACTPERIODE</span></div>
<div class="t" style="left:120.40px;top:1095.7px;font-size:20.3px;color:#222;font-weight:400;letter-spacing:0.041px;"><span>Contract</span></div>
<div class="t" style="left:257.20px;top:1095.7px;font-size:20.3px;color:#222;font-weight:400;letter-spacing:-0.038px;"><span>Periode</span></div>
<div class="t" style="left:681.40px;top:1095.7px;font-size:20.3px;color:#222;font-weight:400;letter-spacing:0.121px;"><span>Gewerkt</span></div>
<div class="t" style="left:827.00px;top:1095.7px;font-size:20.3px;color:#222;font-weight:400;letter-spacing:0.133px;"><span>Beginstand</span></div>
<div class="t" style="left:1059.00px;top:1095.7px;font-size:20.3px;color:#222;font-weight:400;letter-spacing:-0.279px;"><span>Opbouw</span></div>
<div class="t" style="left:1290.00px;top:1095.7px;font-size:20.3px;color:#222;font-weight:400;letter-spacing:0.177px;"><span>Verbruik</span></div>
<div class="t" style="left:1521.50px;top:1095.7px;font-size:20.3px;color:#222;font-weight:400;letter-spacing:0.188px;"><span>Correctie</span></div>
<div class="t" style="left:1752.75px;top:1095.7px;font-size:20.3px;color:#222;font-weight:400;letter-spacing:-0.314px;"><span>Eind Prognose</span></div>
<div class="t" style="left:160.78px;top:1156.7px;font-size:20.3px;color:#fff;font-weight:400;transform:scaleX(0.9211);transform-origin:left;"><span>Bekijk</span></div>
<div class="t" style="left:258.00px;top:1156.2px;font-size:20.9px;color:#222;font-weight:400;letter-spacing:-0.360px;"><span>01-01-2014</span></div>
<div class="t" style="left:375.80px;top:1156.2px;font-size:20.9px;color:#222;font-weight:400;letter-spacing:0.696px;"><span>t/m</span></div>
<div class="t" style="left:421.40px;top:1156.2px;font-size:20.9px;color:#222;font-weight:400;letter-spacing:-0.338px;"><span>31-12-2014</span></div>
<div class="t" style="left:682.40px;top:1155.9px;font-size:20.9px;color:#222;font-weight:400;letter-spacing:-0.336px;"><span>88 uur</span></div>
<div class="t" style="left:563px;width:600px;text-align:center;top:1145.3px;font-size:15px;color:#999;font-weight:400;"><span>Wettel.</span></div>
<div class="t" style="left:563px;width:600px;text-align:center;top:1166.5px;font-size:15.5px;color:#222;font-weight:400;"><span>10,0</span></div>
<div class="t" style="left:633px;width:600px;text-align:center;top:1145.3px;font-size:15px;color:#999;font-weight:400;"><span>Bov.W.</span></div>
<div class="t" style="left:633px;width:600px;text-align:center;top:1166.5px;font-size:15.5px;color:#222;font-weight:400;"><span>16,0</span></div>
<div class="t" style="left:703px;width:600px;text-align:center;top:1145.3px;font-size:15px;color:#999;font-weight:400;"><span>Totaal</span></div>
<div class="t" style="left:703px;width:600px;text-align:center;top:1166.5px;font-size:15.5px;color:#222;font-weight:400;"><span>26,0</span></div>
<div class="t" style="left:794px;width:600px;text-align:center;top:1145.3px;font-size:15px;color:#999;font-weight:400;"><span>Wettel.</span></div>
<div class="t" style="left:794px;width:600px;text-align:center;top:1166.5px;font-size:15.5px;color:#222;font-weight:400;"><span>6,8</span></div>
<div class="t" style="left:864px;width:600px;text-align:center;top:1145.3px;font-size:15px;color:#999;font-weight:400;"><span>Bov.W.</span></div>
<div class="t" style="left:864px;width:600px;text-align:center;top:1166.5px;font-size:15.5px;color:#222;font-weight:400;"><span>0,0</span></div>
<div class="t" style="left:934px;width:600px;text-align:center;top:1145.3px;font-size:15px;color:#999;font-weight:400;"><span>Totaal</span></div>
<div class="t" style="left:934px;width:600px;text-align:center;top:1166.5px;font-size:15.5px;color:#222;font-weight:400;"><span>6,8</span></div>
<div class="t" style="left:1025px;width:600px;text-align:center;top:1145.3px;font-size:15px;color:#999;font-weight:400;"><span>Wettel.</span></div>
<div class="t" style="left:1025px;width:600px;text-align:center;top:1166.5px;font-size:15.5px;color:#222;font-weight:400;"><span>71,0</span></div>
<div class="t" style="left:1095px;width:600px;text-align:center;top:1145.3px;font-size:15px;color:#999;font-weight:400;"><span>Bov.W.</span></div>
<div class="t" style="left:1095px;width:600px;text-align:center;top:1166.5px;font-size:15.5px;color:#222;font-weight:400;"><span>16,0</span></div>
<div class="t" style="left:1165px;width:600px;text-align:center;top:1145.3px;font-size:15px;color:#999;font-weight:400;"><span>Totaal</span></div>
<div class="t" style="left:1165px;width:600px;text-align:center;top:1166.5px;font-size:15.5px;color:#222;font-weight:400;"><span>87,0</span></div>
<div class="t" style="left:1257px;width:600px;text-align:center;top:1145.3px;font-size:15px;color:#999;font-weight:400;"><span>Wettel.</span></div>
<div class="t" style="left:1257px;width:600px;text-align:center;top:1166.5px;font-size:15.5px;color:#222;font-weight:400;"><span>0,0</span></div>
<div class="t" style="left:1327px;width:600px;text-align:center;top:1145.3px;font-size:15px;color:#999;font-weight:400;"><span>Bov.W.</span></div>
<div class="t" style="left:1327px;width:600px;text-align:center;top:1166.5px;font-size:15.5px;color:#222;font-weight:400;"><span>0,0</span></div>
<div class="t" style="left:1397px;width:600px;text-align:center;top:1145.3px;font-size:15px;color:#999;font-weight:400;"><span>Totaal</span></div>
<div class="t" style="left:1397px;width:600px;text-align:center;top:1166.5px;font-size:15.5px;color:#222;font-weight:400;"><span>0,0</span></div>
<div class="t" style="left:1488px;width:600px;text-align:center;top:1145.3px;font-size:15px;color:#999;font-weight:400;"><span>Wettel.</span></div>
<div class="t" style="left:1488px;width:600px;text-align:center;top:1166.5px;font-size:15.5px;color:#222;font-weight:400;"><span>18,7</span></div>
<div class="t" style="left:1558px;width:600px;text-align:center;top:1145.3px;font-size:15px;color:#999;font-weight:400;"><span>Bov.W.</span></div>
<div class="t" style="left:1558px;width:600px;text-align:center;top:1166.5px;font-size:15.5px;color:#222;font-weight:400;"><span>0,0</span></div>
<div class="t" style="left:1628px;width:600px;text-align:center;top:1145.3px;font-size:15px;color:#999;font-weight:400;"><span>Totaal</span></div>
<div class="t" style="left:1628px;width:600px;text-align:center;top:1166.5px;font-size:15.5px;color:#222;font-weight:400;"><span>18,7</span></div>
</body></html>
